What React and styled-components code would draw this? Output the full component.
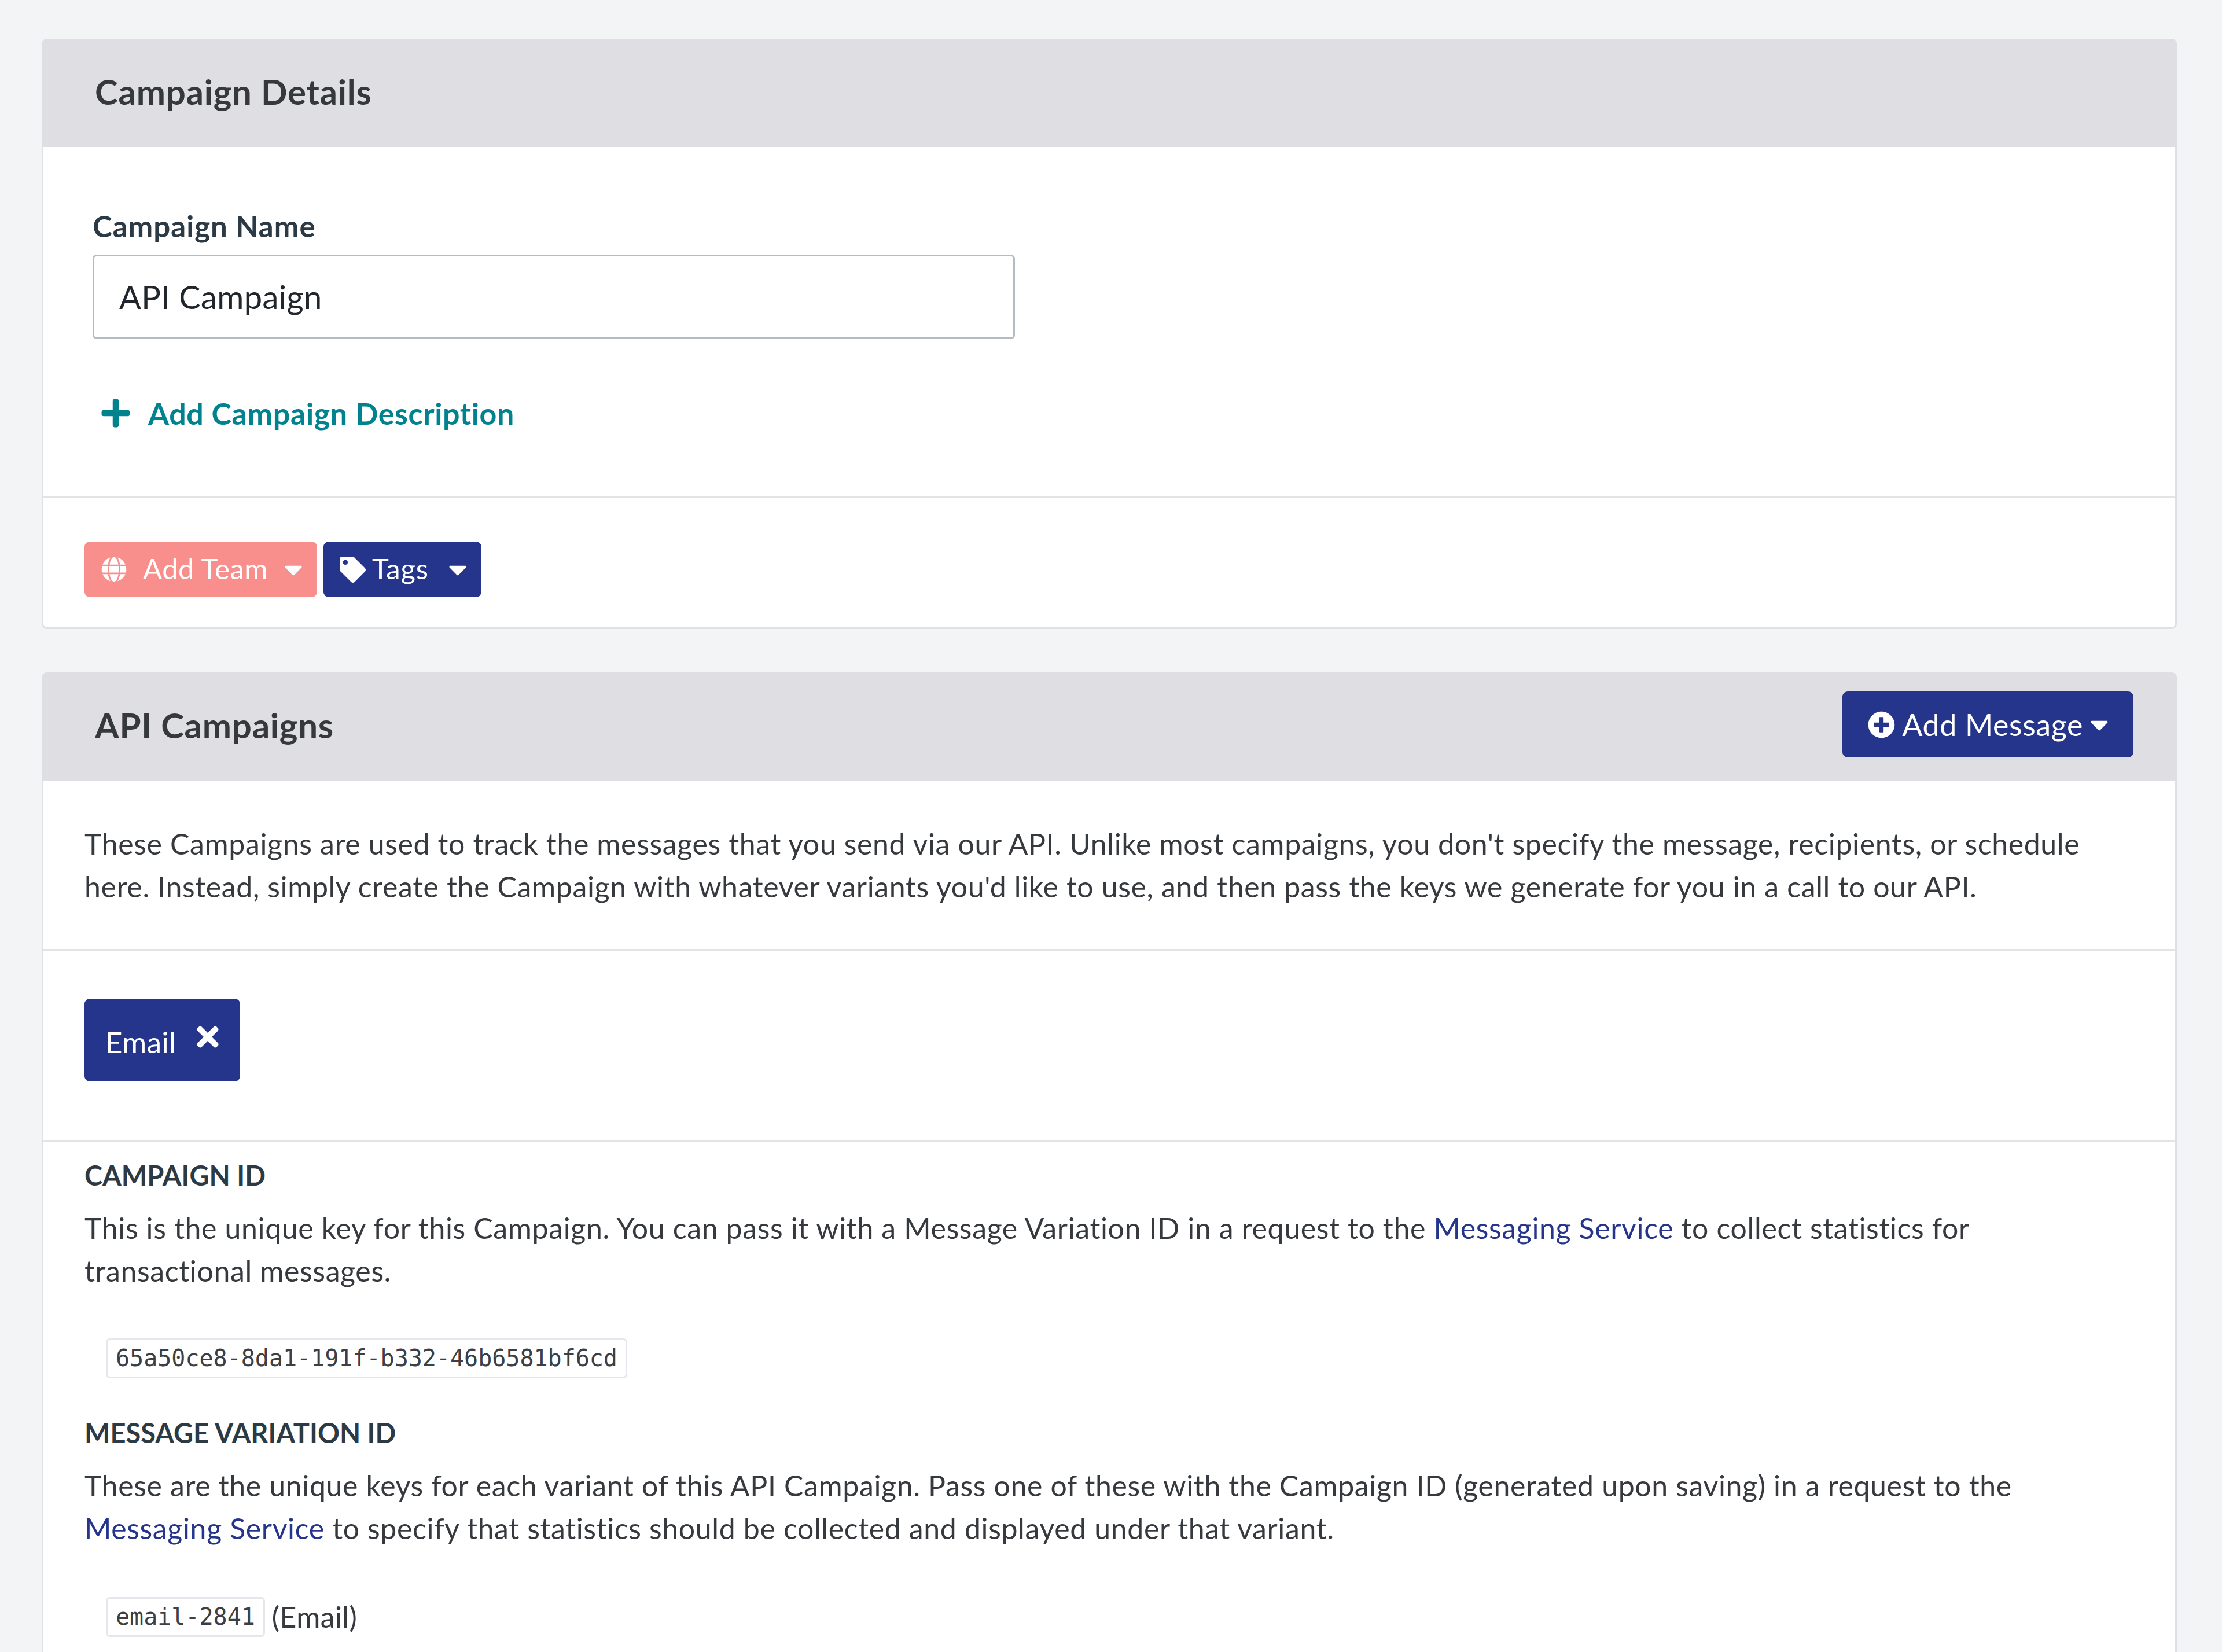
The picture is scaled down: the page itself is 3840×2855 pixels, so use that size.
import React from "react";
import styled, { createGlobalStyle } from "styled-components";
import { FaGlobe, FaTag, FaPlus, FaPlusCircle, FaTimes, FaCaretDown } from "react-icons/fa";

const GlobalStyle = createGlobalStyle`
  html, body {
    margin: 0;
    padding: 0;
    background: #f3f4f6;
  }
  body {
    font-family: "Lato", "Open Sans", sans-serif;
    font-size: 50px;
    line-height: 73.5px;
    color: #363a3f;
  }
`;

const Page = styled.div`
  box-sizing: border-box;
  width: 3840px;
  height: 2855px;
  padding: 67px 78px 0 72px;
  overflow: hidden;
  display: flex;
  flex-direction: column;
  gap: 75px;
`;

const Card = styled.section`
  background: #ffffff;
  border: 3px solid #dfdfe5;
  border-radius: 9px;
  flex-shrink: 0;
`;

const CardHeader = styled.header`
  box-sizing: border-box;
  height: 187px;
  margin: -3px -3px 0;
  padding: 0 75px 4px 92px;
  background: #dedee3;
  border-radius: 9px 9px 0 0;
  display: flex;
  align-items: center;
  justify-content: space-between;
`;

const CardTitle = styled.h2`
  margin: 0;
  font-size: 60px;
  letter-spacing: 0.75px;
  font-weight: 700;
  color: #35383d;
`;

const Section = styled.div`
  padding: ${(props) => props.$padding};
  border-bottom: ${(props) => (props.$last ? "none" : "3px solid #e3e3e8")};
`;

const FieldLabel = styled.label`
  display: block;
  font-size: 51px;
  letter-spacing: 1px;
  line-height: 60px;
  font-weight: 700;
  color: #2c3a46;
  margin-bottom: 19px;
`;

const NameInput = styled.div`
  box-sizing: border-box;
  width: 1594px;
  height: 146px;
  padding: 0 43px;
  border: 3px solid #b4bcc1;
  border-radius: 7px;
  display: flex;
  align-items: center;
  font-size: 56px;
  letter-spacing: 0.4px;
  color: #20262c;
`;

const DescriptionLink = styled.a`
  display: flex;
  align-items: center;
  gap: 28px;
  margin: 95px 0 0 12px;
  font-size: 52px;
  letter-spacing: 0.6px;
  line-height: 66px;
  font-weight: 700;
  color: #00838f;
  svg {
    width: 56px;
    height: 56px;
  }
`;

const ButtonRow = styled.div`
  display: flex;
  gap: 11px;
`;

const Button = styled.button`
  box-sizing: border-box;
  display: flex;
  align-items: center;
  height: ${(props) => props.$height};
  padding: ${(props) => props.$padding};
  gap: ${(props) => props.$gap};
  background: ${(props) => props.$bg || "#25358c"};
  border: none;
  border-radius: 9px;
  color: #ffffff;
  font-family: inherit;
  font-size: ${(props) => props.$size || "49px"};
  letter-spacing: ${(props) => props.$spacing || "0.5px"};
`;

const HeaderButton = styled(Button)`
  margin-bottom: 3px;
`;

const ButtonLabel = styled.span`
  margin-bottom: 5px;
`;

const Caret = styled(FaCaretDown)`
  width: 32px;
  height: 50px;
  margin-left: ${(props) => props.$offset || "0"};
`;

const ButtonIcon = styled.span`
  display: flex;
  margin-bottom: ${(props) => props.$lift || "0"};
  svg {
    width: ${(props) => props.$size};
    height: ${(props) => props.$size};
  }
`;

const Paragraph = styled.p`
  margin: 0;
  font-size: 50px;
  letter-spacing: 0.63px;
  line-height: 73.5px;
  color: #363a3f;
`;

const Link = styled.a`
  color: #25358c;
`;

const KeyHeading = styled.h3`
  margin: 0 0 25px;
  font-size: 47px;
  line-height: 60px;
  font-weight: 700;
  color: #2c3a46;
`;

const KeyRow = styled.div`
  display: flex;
  align-items: center;
  gap: 12px;
  margin: 80px 0 0 37px;
  font-size: 50px;
  letter-spacing: 0.4px;
`;

const Code = styled.code`
  box-sizing: border-box;
  height: 69px;
  padding: 0 14px;
  display: flex;
  align-items: center;
  background: #ffffff;
  border: 3px solid #e6e6ec;
  border-radius: 7px;
  font-family: "DejaVu Sans Mono", monospace;
  font-size: 40px;
  letter-spacing: 0;
  color: #3c4045;
`;

const KeyBlock = styled.div`
  margin-bottom: 64px;
`;

export default function App() {
  return (
    <>
      <GlobalStyle />
      <Page>
        <Card>
          <CardHeader>
            <CardTitle>Campaign Details</CardTitle>
          </CardHeader>
          <Section $padding="107px 85px 110px">
            <FieldLabel>Campaign Name</FieldLabel>
            <NameInput>API Campaign</NameInput>
            <DescriptionLink>
              <FaPlus />
              Add Campaign Description
            </DescriptionLink>
          </Section>
          <Section $padding="76px 71px 52px" $last>
            <ButtonRow>
              <Button $bg="#f98f8d" $height="96px" $padding="0 25px 0 29px" $gap="28px">
                <ButtonIcon $size="44px"><FaGlobe /></ButtonIcon>
                <ButtonLabel>Add Team</ButtonLabel>
                <Caret />
              </Button>
              <Button $height="96px" $padding="0 25px 0 28px" $gap="11px" $spacing="0.8px">
                <ButtonIcon $size="45px"><FaTag /></ButtonIcon>
                <ButtonLabel>Tags</ButtonLabel>
                <Caret $offset="23px" />
              </Button>
            </ButtonRow>
          </Section>
        </Card>
        <Card>
          <CardHeader>
            <CardTitle>API Campaigns</CardTitle>
            <HeaderButton $height="114px" $padding="0 43px 0 44px" $gap="12px" $size="52px" $spacing="0.6px">
              <ButtonIcon $size="47px"><FaPlusCircle /></ButtonIcon>
              Add Message
              <Caret />
            </HeaderButton>
          </CardHeader>
          <Section $padding="73px 85px 71px 71px">
            <Paragraph>
              These Campaigns are used to track the messages that you send via our API. Unlike most campaigns, you don't specify the message, recipients, or schedule here. Instead, simply create the Campaign with whatever variants you'd like to use, and then pass the keys we generate for you in a call to our API.
            </Paragraph>
          </Section>
          <Section $padding="83px 71px 101px">
            <Button $height="143px" $padding="6px 29px 0 36px" $gap="27px" $size="51px">
              Email
              <ButtonIcon $size="54px" $lift="18px"><FaTimes /></ButtonIcon>
            </Button>
          </Section>
          <Section $padding="28px 85px 0 71px" $last>
            <KeyBlock>
              <KeyHeading>CAMPAIGN ID</KeyHeading>
              <Paragraph>
                This is the unique key for this Campaign. You can pass it with a Message Variation ID in a request to the <Link>Messaging Service</Link> to collect statistics for transactional messages.
              </Paragraph>
              <KeyRow>
                <Code>65a50ce8-8da1-191f-b332-46b6581bf6cd</Code>
              </KeyRow>
            </KeyBlock>
            <KeyBlock>
              <KeyHeading>MESSAGE VARIATION ID</KeyHeading>
              <Paragraph>
                These are the unique keys for each variant of this API Campaign. Pass one of these with the Campaign ID (generated upon saving) in a request to the <Link>Messaging Service</Link> to specify that statistics should be collected and displayed under that variant.
              </Paragraph>
              <KeyRow>
                <Code>email-2841</Code>
                (Email)
              </KeyRow>
            </KeyBlock>
          </Section>
        </Card>
      </Page>
    </>
  );
}
